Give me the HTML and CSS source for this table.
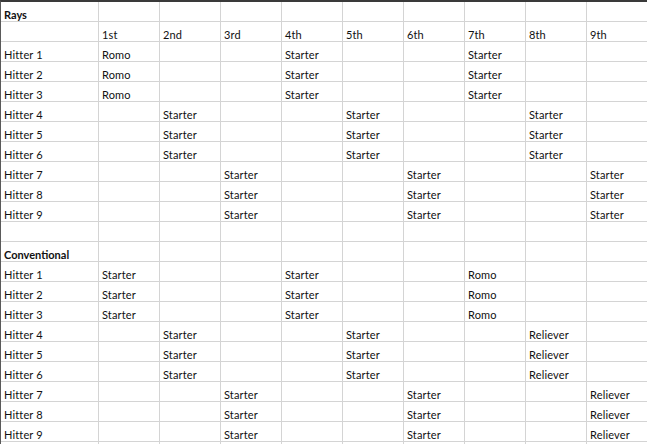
FILE: index.html
```html
<!DOCTYPE html>
<html>
<head>
<meta charset="utf-8">
<link rel="stylesheet" href="styles.css">
</head>
<body>
<div class="sheet">
  <div class="c b">Rays</div><div class="c"></div><div class="c"></div><div class="c"></div><div class="c"></div><div class="c"></div><div class="c"></div><div class="c"></div><div class="c"></div><div class="c"></div>
  <div class="c"></div><div class="c">1st</div><div class="c">2nd</div><div class="c">3rd</div><div class="c">4th</div><div class="c">5th</div><div class="c">6th</div><div class="c">7th</div><div class="c">8th</div><div class="c">9th</div>
  <div class="c">Hitter 1</div><div class="c">Romo</div><div class="c"></div><div class="c"></div><div class="c">Starter</div><div class="c"></div><div class="c"></div><div class="c">Starter</div><div class="c"></div><div class="c"></div>
  <div class="c">Hitter 2</div><div class="c">Romo</div><div class="c"></div><div class="c"></div><div class="c">Starter</div><div class="c"></div><div class="c"></div><div class="c">Starter</div><div class="c"></div><div class="c"></div>
  <div class="c">Hitter 3</div><div class="c">Romo</div><div class="c"></div><div class="c"></div><div class="c">Starter</div><div class="c"></div><div class="c"></div><div class="c">Starter</div><div class="c"></div><div class="c"></div>
  <div class="c">Hitter 4</div><div class="c"></div><div class="c">Starter</div><div class="c"></div><div class="c"></div><div class="c">Starter</div><div class="c"></div><div class="c"></div><div class="c">Starter</div><div class="c"></div>
  <div class="c">Hitter 5</div><div class="c"></div><div class="c">Starter</div><div class="c"></div><div class="c"></div><div class="c">Starter</div><div class="c"></div><div class="c"></div><div class="c">Starter</div><div class="c"></div>
  <div class="c">Hitter 6</div><div class="c"></div><div class="c">Starter</div><div class="c"></div><div class="c"></div><div class="c">Starter</div><div class="c"></div><div class="c"></div><div class="c">Starter</div><div class="c"></div>
  <div class="c">Hitter 7</div><div class="c"></div><div class="c"></div><div class="c">Starter</div><div class="c"></div><div class="c"></div><div class="c">Starter</div><div class="c"></div><div class="c"></div><div class="c">Starter</div>
  <div class="c">Hitter 8</div><div class="c"></div><div class="c"></div><div class="c">Starter</div><div class="c"></div><div class="c"></div><div class="c">Starter</div><div class="c"></div><div class="c"></div><div class="c">Starter</div>
  <div class="c">Hitter 9</div><div class="c"></div><div class="c"></div><div class="c">Starter</div><div class="c"></div><div class="c"></div><div class="c">Starter</div><div class="c"></div><div class="c"></div><div class="c">Starter</div>
  <div class="c"></div><div class="c"></div><div class="c"></div><div class="c"></div><div class="c"></div><div class="c"></div><div class="c"></div><div class="c"></div><div class="c"></div><div class="c"></div>
  <div class="c b">Conventional</div><div class="c"></div><div class="c"></div><div class="c"></div><div class="c"></div><div class="c"></div><div class="c"></div><div class="c"></div><div class="c"></div><div class="c"></div>
  <div class="c">Hitter 1</div><div class="c">Starter</div><div class="c"></div><div class="c"></div><div class="c">Starter</div><div class="c"></div><div class="c"></div><div class="c">Romo</div><div class="c"></div><div class="c"></div>
  <div class="c">Hitter 2</div><div class="c">Starter</div><div class="c"></div><div class="c"></div><div class="c">Starter</div><div class="c"></div><div class="c"></div><div class="c">Romo</div><div class="c"></div><div class="c"></div>
  <div class="c">Hitter 3</div><div class="c">Starter</div><div class="c"></div><div class="c"></div><div class="c">Starter</div><div class="c"></div><div class="c"></div><div class="c">Romo</div><div class="c"></div><div class="c"></div>
  <div class="c">Hitter 4</div><div class="c"></div><div class="c">Starter</div><div class="c"></div><div class="c"></div><div class="c">Starter</div><div class="c"></div><div class="c"></div><div class="c">Reliever</div><div class="c"></div>
  <div class="c">Hitter 5</div><div class="c"></div><div class="c">Starter</div><div class="c"></div><div class="c"></div><div class="c">Starter</div><div class="c"></div><div class="c"></div><div class="c">Reliever</div><div class="c"></div>
  <div class="c">Hitter 6</div><div class="c"></div><div class="c">Starter</div><div class="c"></div><div class="c"></div><div class="c">Starter</div><div class="c"></div><div class="c"></div><div class="c">Reliever</div><div class="c"></div>
  <div class="c">Hitter 7</div><div class="c"></div><div class="c"></div><div class="c">Starter</div><div class="c"></div><div class="c"></div><div class="c">Starter</div><div class="c"></div><div class="c"></div><div class="c">Reliever</div>
  <div class="c">Hitter 8</div><div class="c"></div><div class="c"></div><div class="c">Starter</div><div class="c"></div><div class="c"></div><div class="c">Starter</div><div class="c"></div><div class="c"></div><div class="c">Reliever</div>
  <div class="c">Hitter 9</div><div class="c"></div><div class="c"></div><div class="c">Starter</div><div class="c"></div><div class="c"></div><div class="c">Starter</div><div class="c"></div><div class="c"></div><div class="c">Reliever</div>
  <div class="c"></div><div class="c"></div><div class="c"></div><div class="c"></div><div class="c"></div><div class="c"></div><div class="c"></div><div class="c"></div><div class="c"></div><div class="c"></div>
</div>
</body>
</html>
```
FILE: styles.css
```css
html, body {
  margin: 0;
  padding: 0;
  background: #ffffff;
  overflow: hidden;
}
.sheet {
  display: grid;
  grid-template-columns: 97px repeat(9, 60px);
  grid-auto-rows: 19px;
  gap: 1px;
  background: #d4d4d4;
  border-top: 2px solid #3a3a3a;
  border-left: 1px solid #5a5a5a;
  padding: 0 1px 1px 0;
  width: 647px;
  box-sizing: border-box;
  font-family: Lato, "Liberation Sans", sans-serif;
  font-size: 11px;
  letter-spacing: 0.15px;
  color: #111;
}
.c {
  background: #ffffff;
  display: flex;
  align-items: flex-end;
  padding: 0 0 0 3px;
  line-height: 12px;
  white-space: nowrap;
  overflow: hidden;
}
.b {
  font-weight: bold;
  letter-spacing: 0;
}
```
